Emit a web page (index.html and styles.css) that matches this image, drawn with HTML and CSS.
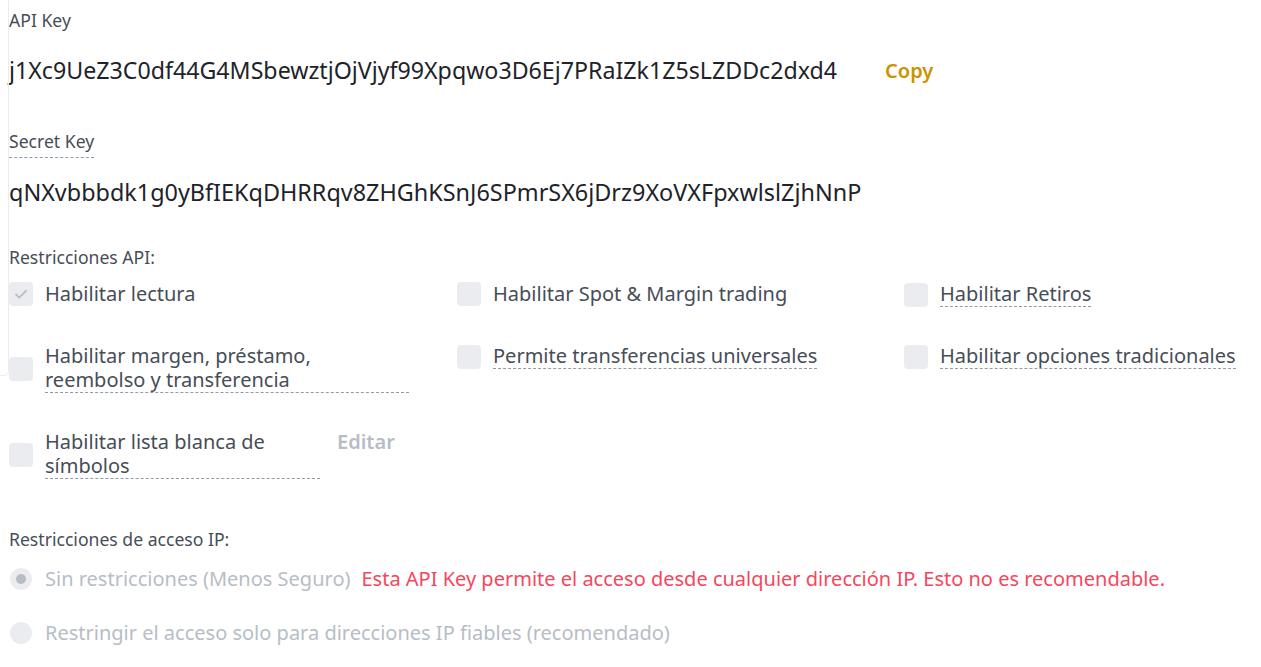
FILE: index.html
```html
<!DOCTYPE html>
<html lang="es">
<head>
<meta charset="utf-8">
<title>API Key</title>
<link rel="stylesheet" href="styles.css">
</head>
<body>
<div class="panel">
  <div class="side-frame"></div>

  <div class="field-label">API Key</div>
  <div class="key-row">
    <span class="key-value">j1Xc9UeZ3C0df44G4MSbewztjOjVjyf99Xpqwo3D6Ej7PRaIZk1Z5sLZDDc2dxd4</span>
    <span class="copy">Copy</span>
  </div>

  <div class="field-label secret-label"><span class="dashed">Secret Key</span></div>
  <div class="key-row secret-row">
    <span class="key-value secret-value">qNXvbbbdk1g0yBfIEKqDHRRqv8ZHGhKSnJ6SPmrSX6jDrz9XoVXFpxwlslZjhNnP</span>
  </div>

  <div class="field-label section-label">Restricciones API:</div>
  <div class="perm-grid">
    <div class="perm">
      <span class="check checked"><svg width="16" height="16" viewBox="0 0 16 16"><path d="M3 8.4l3.2 3.2L13 4.8" fill="none" stroke="#b7bdc6" stroke-width="1.8" stroke-linecap="round" stroke-linejoin="round"/></svg></span>
      <span class="perm-text">Habilitar lectura</span>
    </div>
    <div class="perm">
      <span class="check"></span>
      <span class="perm-text">Habilitar Spot &amp; Margin trading</span>
    </div>
    <div class="perm">
      <span class="check"></span>
      <span class="perm-text dashed">Habilitar Retiros</span>
    </div>

    <div class="perm">
      <span class="check"></span>
      <span class="perm-text dashed block w-wide">Habilitar margen, préstamo, reembolso y transferencia</span>
    </div>
    <div class="perm">
      <span class="check"></span>
      <span class="perm-text dashed">Permite transferencias universales</span>
    </div>
    <div class="perm">
      <span class="check"></span>
      <span class="perm-text dashed">Habilitar opciones tradicionales</span>
    </div>

    <div class="perm perm-whitelist">
      <span class="check"></span>
      <span class="perm-text dashed block w-narrow">Habilitar lista blanca de símbolos</span>
      <span class="edit">Editar</span>
    </div>
  </div>

  <div class="field-label ip-label">Restricciones de acceso IP:</div>
  <div class="radio-row">
    <span class="radio on"></span>
    <span class="radio-text">Sin restricciones (Menos Seguro)</span>
    <span class="warn">Esta API Key permite el acceso desde cualquier dirección IP. Esto no es recomendable.</span>
  </div>
  <div class="radio-row second">
    <span class="radio"></span>
    <span class="radio-text">Restringir el acceso solo para direcciones IP fiables (recomendado)</span>
  </div>
</div>
</body>
</html>
```

FILE: styles.css
```css
* { box-sizing: border-box; }

html, body {
  margin: 0;
  background: #ffffff;
}

body {
  font-family: "Noto Sans", "Open Sans", sans-serif;
  color: #1e2329;
  overflow: hidden;
}

.panel {
  position: relative;
  padding: 9px 9px 0 9px;
  height: 667px;
}

.side-frame {
  position: absolute;
  left: -12px;
  top: -12px;
  width: 21px;
  height: 388px;
  border: 1px solid #eaecef;
  border-radius: 5px;
}

.field-label {
  font-size: 17.6px;
  line-height: 22px;
  color: #474d57;
}

.key-row {
  display: flex;
  align-items: center;
  gap: 48px;
  margin-top: 25px;
  height: 28px;
}

.key-value {
  font-size: 23.2px;
  line-height: 28px;
  color: #1e2329;
  white-space: nowrap;
}

.secret-value {
  font-size: 23.4px;
}

.copy {
  font-size: 20px;
  font-weight: 600;
  color: #c99400;
}

.secret-label {
  margin-top: 46px;
}

.dashed {
  border-bottom: 1px dashed #929aa5;
}

.secret-label .dashed {
  display: inline-block;
  padding-bottom: 5px;
}

.secret-row {
  margin-top: 20px;
}

.section-label {
  margin-top: 40px;
}

.perm-grid {
  margin-top: 14px;
  display: grid;
  grid-template-columns: 448px 447px 1fr;
  row-gap: 37px;
  align-items: start;
}

.perm {
  display: flex;
  align-items: center;
  gap: 12px;
}

.check {
  flex: none;
  width: 24px;
  height: 24px;
  border-radius: 4px;
  background: #eaecef;
  display: flex;
  align-items: center;
  justify-content: center;
}

.perm-text {
  font-size: 20px;
  line-height: 24px;
  color: #474d57;
  white-space: nowrap;
}

.perm-text.block {
  display: inline-block;
  white-space: normal;
}

.w-wide { width: 364px; flex: none; }
.w-narrow { width: 275px; flex: none; }

.edit {
  align-self: flex-start;
  margin-left: 5px;
  font-size: 20px;
  line-height: 24px;
  font-weight: 600;
  color: #b7bdc6;
}

.ip-label {
  margin-top: 49px;
}

.radio-row {
  display: flex;
  align-items: center;
  margin-top: 17px;
  height: 24px;
}

.radio-row.second {
  margin-top: 30px;
}

.radio {
  flex: none;
  width: 22px;
  height: 22px;
  border-radius: 50%;
  background: #eaecef;
  margin-left: 1px;
  margin-right: 13px;
  display: flex;
  align-items: center;
  justify-content: center;
}

.radio.on::after {
  content: "";
  width: 10px;
  height: 10px;
  border-radius: 50%;
  background: #b7bdc6;
}

.radio-text {
  font-size: 20px;
  line-height: 24px;
  color: #b7bdc6;
  white-space: nowrap;
}

.warn {
  margin-left: 11px;
  font-size: 20px;
  line-height: 24px;
  color: #f6465d;
  white-space: nowrap;
}
```
